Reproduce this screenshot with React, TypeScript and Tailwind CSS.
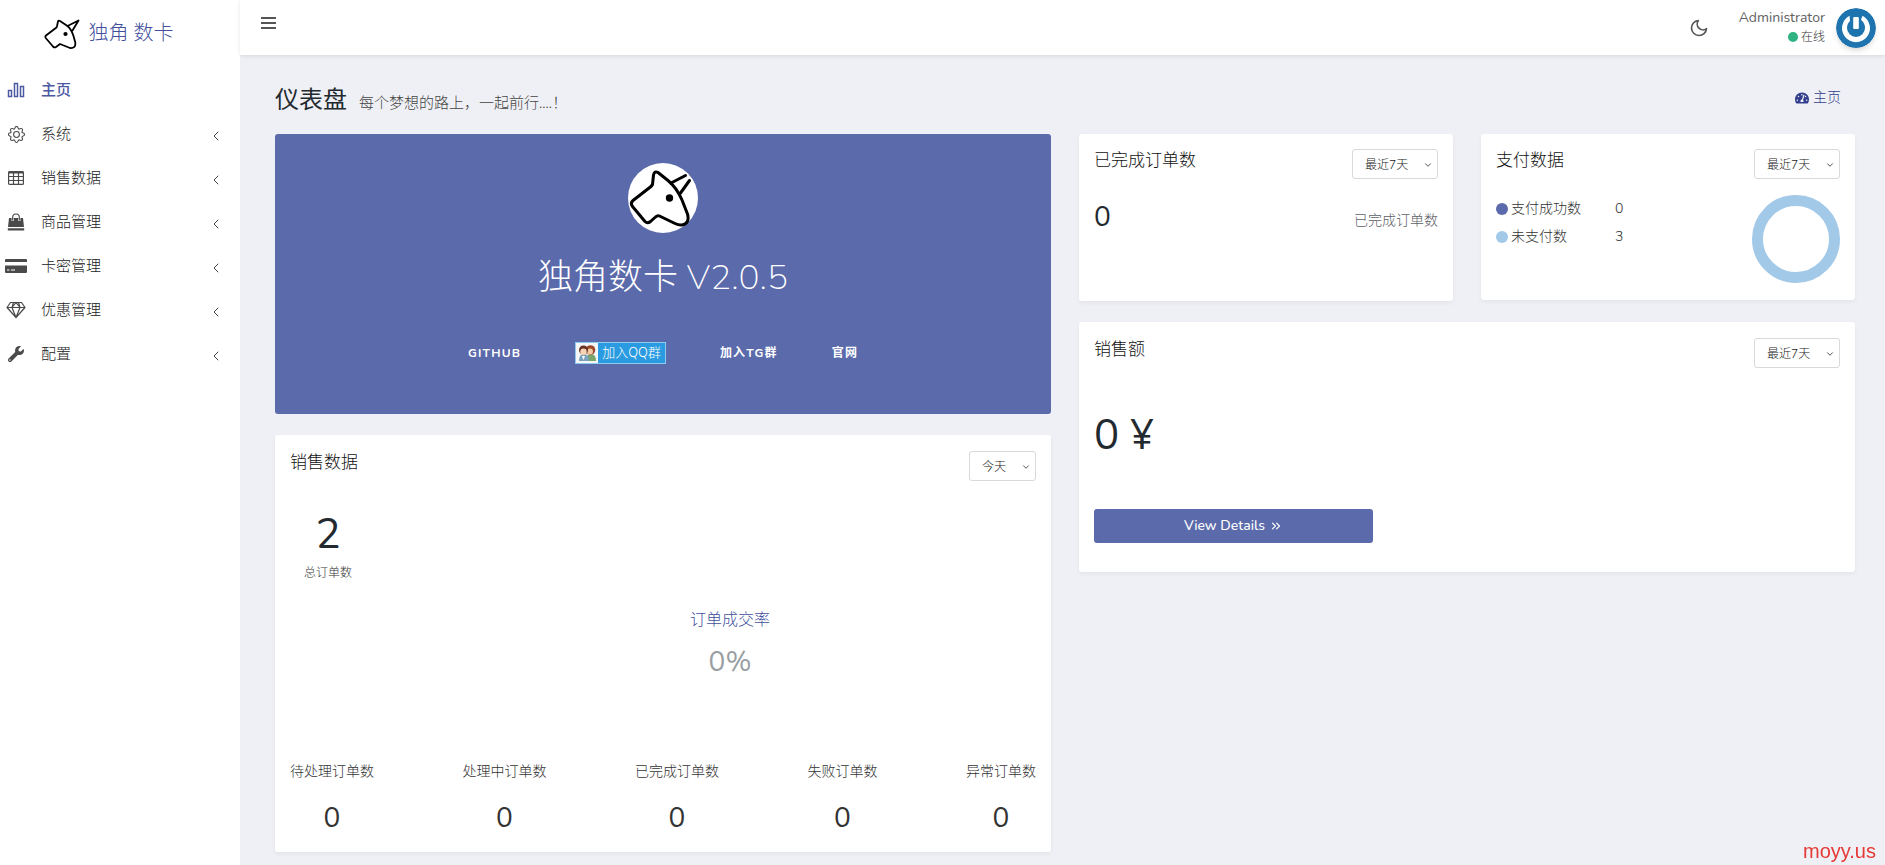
import React from "react";
import { BsGear } from "react-icons/bs";
import { FaTachometerAlt, FaWrench } from "react-icons/fa";
import { FiMoon, FiChevronLeft, FiChevronDown, FiChevronsRight } from "react-icons/fi";

function Unicorn({ className, width }: { className: string; width: number }) {
  return (
    <svg viewBox="0 0 70 70" className={className} fill="none" stroke="#000" strokeWidth={width} strokeLinecap="round" strokeLinejoin="round" aria-hidden="true">
      <path d="M24.500 21.500L25.500 12Q26.500 7.500 30 9.500L40 17.500Q49 25 54 37L59.500 51Q62 60.500 54 62Q51 62.500 47 60.500L31.500 53Q29.500 52 27.500 54L22.500 58.500Q19.500 61 17 58.500L4.500 43.500Q2 40 5 37.500L23 23.500Z" />
      <path d="M43 20L57.500 12.500M52.500 30L61.500 17.500" />
      <circle cx="41.500" cy="35" r="2.200" fill="#000" />
    </svg>
  );
}

function LogoMark() {
  return (
    <svg viewBox="0 0 36 32" className="h-8 w-9 shrink-0" fill="none" stroke="#000" strokeWidth="1.800" strokeLinecap="round" strokeLinejoin="round" aria-hidden="true">
      <path d="M13 8L14 3.500Q14.500 2 16 3L23.500 8Q27.500 11.500 29.500 18L31.300 24.500Q32 30.500 26 30L16 26L12 29Q10.500 30 9 28.500L1.700 20Q.8 18.500 2.300 17.300L12.500 9.500Z" />
      <path d="M23.500 8L34.500 2.500L28.500 12.500" />
      <circle cx="21.500" cy="16" r="1.200" fill="#000" />
    </svg>
  );
}

const BarsIcon = () => (
  <svg viewBox="0 0 18 16" className="h-4 w-[18px]" fill="none" stroke="currentColor" strokeWidth="1.500">
    <path d="M1.500 8.500h3v6h-3zM7.500 1.500h3v13h-3zM13.500 4.500h3v10h-3z" />
  </svg>
);
const TableIcon = () => (
  <svg viewBox="0 0 16 14" className="h-[14px] w-4" fill="none" stroke="currentColor" strokeWidth="1.200">
    <rect x=".6" y=".6" width="14.800" height="12.800" rx="1" />
    <path d="M.6 1.500h14.800" strokeWidth="2" />
    <path d="M.6 5.500h14.800M.6 9.500h14.800M5.500 1v12.400M10.500 1v12.400" />
  </svg>
);
const BagIcon = () => (
  <svg viewBox="0 0 18 18" className="h-[18px] w-[18px]" fill="none" stroke="currentColor">
    <path d="M2 5h14l1 9H1zM.8 15.200h16.400V17.500H.8z" fill="currentColor" stroke="none" />
    <path d="M5.700 8V4.500a3.300 3.300 0 0 1 6.600 0V8" stroke="#fff" strokeWidth="2.200" />
    <path d="M5.700 7.500V4.300a3.300 3.300 0 0 1 6.600 0v3.200" strokeWidth="1.200" />
  </svg>
);
const CardIcon = () => (
  <svg viewBox="0 0 22 16" className="h-4 w-[22px]" fill="currentColor">
    <path d="M1 1h20q1 0 1 1v2H0V2q0-1 1-1zM0 7.500h22V14q0 1-1 1H1q-1 0-1-1z" />
    <path d="M2 12h2.500M6 12h4" stroke="#fff" strokeWidth="1.200" />
  </svg>
);
const GemIcon = () => (
  <svg viewBox="0 0 20 18" className="h-[18px] w-5" fill="none" stroke="currentColor" strokeWidth="1.200" strokeLinejoin="round">
    <path d="M4.500 1.500h11l3.500 5-9 10-9-10zM1 6.500h18M6 6.500l4 10 4-10M6 6.500l1.500-5M14 6.500l-1.500-5M6 6.500L10 1.500l4 5" />
  </svg>
);

const menu = [
  { label: "主页", icon: <BarsIcon />, active: true },
  { label: "系统", icon: <BsGear className="size-[17px]" /> },
  { label: "销售数据", icon: <TableIcon /> },
  { label: "商品管理", icon: <BagIcon /> },
  { label: "卡密管理", icon: <CardIcon /> },
  { label: "优惠管理", icon: <GemIcon /> },
  { label: "配置", icon: <FaWrench className="size-4" /> },
];

function Sidebar() {
  return (
    <aside className="w-60 shrink-0 bg-white">
      <a href="#home" className="flex h-[68px] items-center justify-center gap-2 pr-[22px] text-xl font-light text-[#414f9c]">
        <LogoMark />
        <span>独角 数卡</span>
      </a>
      <nav className="flex flex-col">
        {menu.map((m) => (
          <a
            key={m.label}
            href="#menu"
            className={m.active ? "flex h-11 items-center pr-4 text-[15px] font-medium text-[#4c5aa3]" : "flex h-11 items-center pr-4 text-[15px] font-light text-[#222]"}
          >
            <span className={m.active ? "flex w-8 justify-center" : "flex w-8 justify-center text-[#4a4a4a]"}>{m.icon}</span>
            <span className="ml-[9px] grow pt-px">{m.label}</span>
            {!m.active && <FiChevronLeft strokeWidth={1.5} className="mt-1 size-4 text-[#444]" />}
          </a>
        ))}
      </nav>
    </aside>
  );
}

function Topbar() {
  return (
    <header className="z-10 flex h-[55px] shrink-0 items-center justify-between bg-white pr-[9px] pl-[21px] shadow-[0_1px_4px_rgba(0,0,0,0.1)]">
      <button aria-label="菜单" className="mb-[10px] flex h-5 w-[15px] flex-col justify-center gap-[3px]">
        <span className="h-0.5 w-full bg-[#555]" />
        <span className="h-0.5 w-full bg-[#555]" />
        <span className="h-0.5 w-full bg-[#555]" />
      </button>
      <div className="flex items-center">
        <button aria-label="夜间模式" className="mr-[30px] text-[#555]">
          <FiMoon className="size-5" />
        </button>
        <div className="flex flex-col items-end text-[#626262]">
          <span className="text-sm leading-[18px]">Administrator</span>
          <span className="flex items-center gap-[3px] text-xs leading-5 font-light text-[#333]">
            <i className="size-[10px] rounded-full bg-[#2fb380]" />
            在线
          </span>
        </div>
        <svg viewBox="0 0 40 40" className="ml-[11px] size-10 rounded-full shadow-md" role="img" aria-label="头像">
          <circle cx="20" cy="20" r="20" fill="#1e74ae" />
          <path d="M13.500 7.800A14 14 0 1 0 26.500 7.800L25 11.800Q29 15 29 20A9 9 0 0 1 11 20Q11 15.500 14 13z" fill="#fff" />
          <rect x="17.200" y="9" width="5.600" height="12" rx="1" fill="#fff" />
        </svg>
      </div>
    </header>
  );
}

function RangeSelect({ value, label }: { value: string; label: string }) {
  return (
    <div className="relative">
      <select aria-label={label} defaultValue={value} className="h-[30px] appearance-none rounded-[3px] border border-[#d9d9d9] bg-white pt-0.5 pr-7 pl-3 text-xs font-light text-[#222]">
        <option>{value}</option>
      </select>
      <FiChevronDown className="pointer-events-none absolute top-[11px] right-[5px] size-[10px] text-[#333]" />
    </div>
  );
}

function Card({ title, value, className, children }: { title: string; value: string; className: string; children: React.ReactNode }) {
  return (
    <section className={"flex flex-col rounded-[3px] bg-white px-[15px] shadow-[0_2px_4px_rgba(0,0,0,0.05)] " + className}>
      <div className="flex items-start justify-between">
        <h2 className="text-[17px] leading-6 font-light text-[#111]">{title}</h2>
        <RangeSelect value={value} label={title} />
      </div>
      {children}
    </section>
  );
}

function Hero() {
  return (
    <section className="flex h-[280px] flex-col items-center rounded-[3px] bg-[#5b6aab] pt-[29px] text-white">
      <div className="size-[70px] rounded-full bg-white">
        <Unicorn className="size-[70px]" width={3} />
      </div>
      <h1 className="mt-5 text-[35px] leading-[50px] font-light">
        独角数卡 <span className="font-extralight">V2.0.5</span>
      </h1>
      <div className="mt-[39px] flex h-[22px] items-center gap-[54px] text-xs font-bold tracking-widest">
        <a href="#github">GITHUB</a>
        <a href="#qq" className="flex h-[22px] items-center border border-[#8fcaf0] bg-[#2a9be0] pr-1 text-[13px] font-light tracking-normal">
          <svg viewBox="0 0 22 20" className="mr-1 h-5 w-[22px]" aria-hidden="true">
            <path d="M0 0h22v20H0z" fill="#f5f7f7" />
            <path d="M10 18q0-7 5-7t5 7z" fill="#79a56b" />
            <circle cx="14.500" cy="7" r="4.800" fill="#9c4a2b" />
            <circle cx="14" cy="8.500" r="3" fill="#f3c9a5" />
            <path d="M3 18q0-7 5-7t5 7z" fill="#7aa2bd" />
            <circle cx="7.500" cy="7" r="4.500" fill="#663222" />
            <circle cx="7.500" cy="8.800" r="3.200" fill="#f6d4b5" />
            <path d="M6 13h3l-1.500 4z" fill="#fff" />
          </svg>
          <span className="pt-0.5">加入QQ群</span>
        </a>
        <a href="#tg">加入TG群</a>
        <a href="#site">官网</a>
      </div>
    </section>
  );
}

const stats = ["待处理订单数", "处理中订单数", "已完成订单数", "失败订单数", "异常订单数"];

export default function App() {
  return (
    <div className="flex min-h-screen bg-[#eff0f5] font-['Nunito','Open_Sans','Noto_Sans_CJK_SC',sans-serif] text-[#333]">
      <Sidebar />
      <div className="flex min-w-0 grow flex-col">
        <Topbar />
        <main className="pt-6 pr-[30px] pb-3 pl-[35px]">
          <div className="flex h-[55px] items-start justify-between pr-[14px]">
            <div className="flex items-baseline gap-3">
              <h1 className="text-2xl leading-[43px] text-[#22292f]">仪表盘</h1>
              <small className="text-[15px] font-light text-[#444]">每个梦想的路上，一起前行....！</small>
            </div>
            <a href="#home" className="flex items-center gap-1 pt-[9px] text-sm font-light text-[#333f8c]">
              <FaTachometerAlt className="size-[14px]" />
              主页
            </a>
          </div>
          <div className="grid grid-cols-2 items-start gap-7">
            <div className="flex flex-col gap-[21px]">
              <Hero />
              <Card title="销售数据" value="今天" className="h-[417px] pt-4">
                <div className="mt-6 flex w-[76px] flex-col items-center">
                  <span className="text-[42px] leading-[60px] text-[#22292f]">2</span>
                  <span className="text-xs leading-4 font-light">总订单数</span>
                </div>
                <div className="mt-[27px] flex flex-col items-center pl-[134px]">
                  <span className="text-base leading-6 font-light text-[#414f9c]">订单成交率</span>
                  <span className="mt-[10px] text-[28px] leading-10 text-[#999ea3]">0%</span>
                </div>
                <dl className="mt-20 flex justify-between">
                  {stats.map((s) => (
                    <div key={s} className="flex flex-col items-center">
                      <dt className="text-sm leading-5 font-light">{s}</dt>
                      <dd className="mt-4 text-[28px] leading-10">0</dd>
                    </div>
                  ))}
                </dl>
              </Card>
            </div>
            <div className="flex flex-col gap-[21px]">
              <div className="grid grid-cols-2 items-start gap-7">
                <Card title="已完成订单数" value="最近7天" className="h-[167px] pt-[15px]">
                  <div className="mt-[17px] flex items-center justify-between">
                    <span className="text-[28px] leading-[42px] text-[#22292f]">0</span>
                    <span className="mt-2 text-sm font-light text-[#5c6064]">已完成订单数</span>
                  </div>
                </Card>
                <Card title="支付数据" value="最近7天" className="h-[166px] pt-[15px]">
                  <div className="mt-4 flex justify-between">
                    <dl className="text-sm leading-7 font-light">
                      <div className="flex items-center">
                        <dt className="flex w-[119px] items-center gap-[3px]">
                          <i className="size-3 rounded-full bg-[#5b6aab]" />
                          支付成功数
                        </dt>
                        <dd>0</dd>
                      </div>
                      <div className="flex items-center">
                        <dt className="flex w-[119px] items-center gap-[3px]">
                          <i className="size-3 rounded-full bg-[#a3c9e9]" />
                          未支付数
                        </dt>
                        <dd>3</dd>
                      </div>
                    </dl>
                    <svg viewBox="0 0 88 88" className="size-[88px]" role="img" aria-label="支付数据">
                      <circle cx="44" cy="44" r="38.500" fill="none" stroke="#a3c9e9" strokeWidth="11" />
                    </svg>
                  </div>
                </Card>
              </div>
              <Card title="销售额" value="最近7天" className="h-[250px] pt-4">
                <div className="mt-[38px] h-[60px] text-[42px] leading-[60px] text-[#22292f]">
                  0 <span className="font-['Open_Sans',sans-serif] leading-none">¥</span>
                </div>
                <a href="#details" className="mt-[43px] flex h-[34px] w-[279px] items-center justify-center gap-1 rounded-[3px] bg-[#5b6aab] text-sm font-medium text-white">
                  View Details
                  <FiChevronsRight className="size-[14px]" />
                </a>
              </Card>
            </div>
          </div>
        </main>
      </div>
      <div className="fixed right-[9px] bottom-0 font-['Liberation_Sans',sans-serif] text-xl text-[#e53935]">moyy.us</div>
    </div>
  );
}
